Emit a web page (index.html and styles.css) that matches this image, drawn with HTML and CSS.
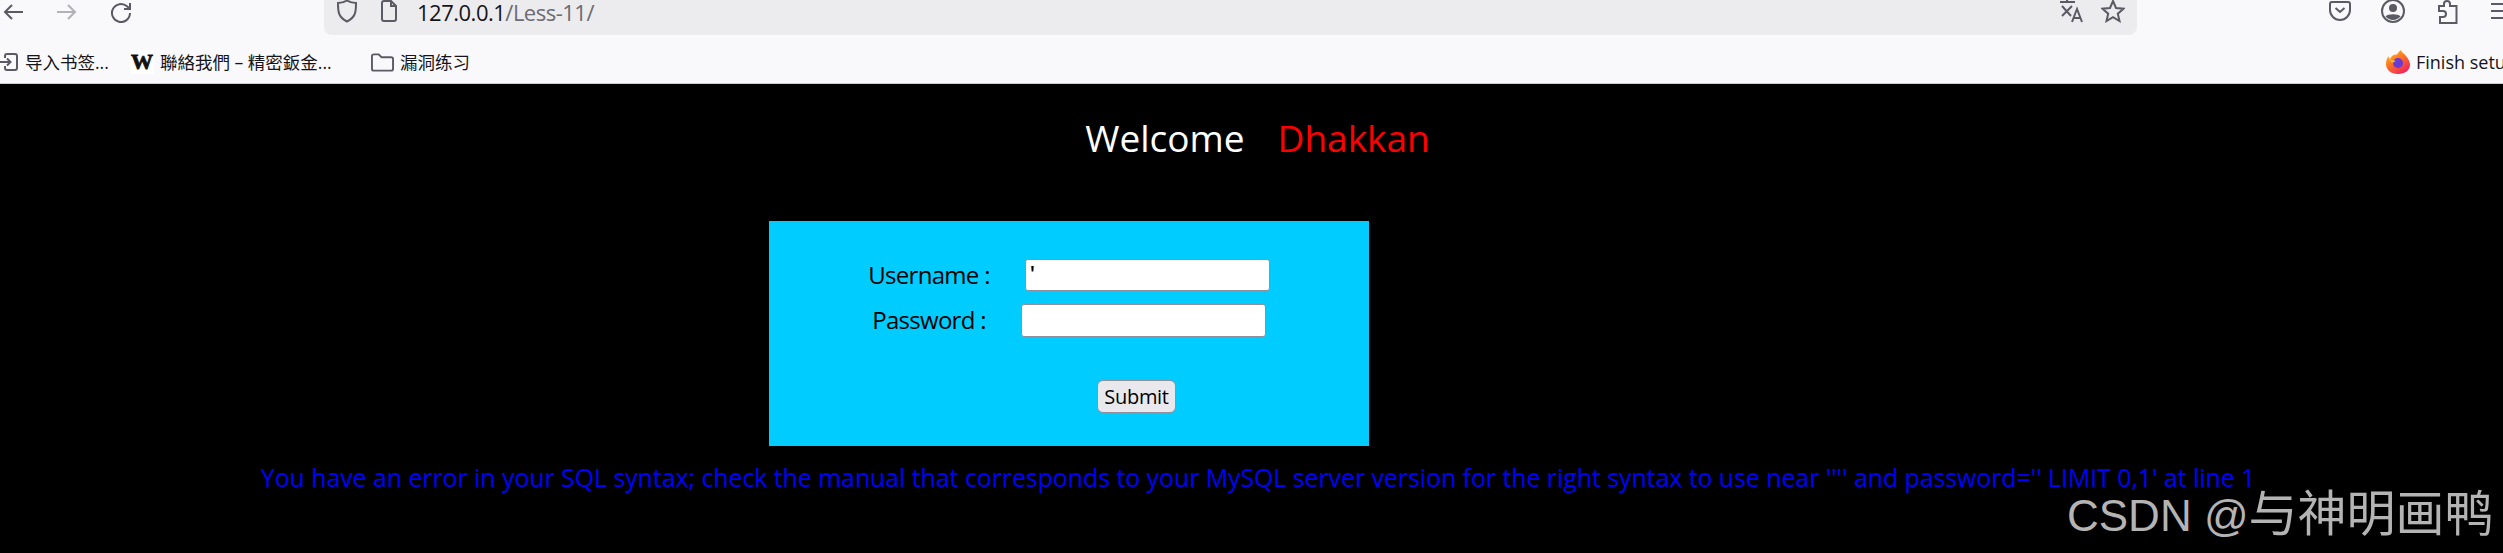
FILE: index.html
```html
<!DOCTYPE html>
<html lang="en">
<head>
<meta charset="utf-8">
<title>Less-11</title>
<link rel="stylesheet" href="styles.css">
</head>
<body>
<header class="chrome">
  <div class="toolbar">
    <div class="nav">
      <svg class="ic" viewBox="0 0 22 20"><path d="M21 10H3M10 3l-7 7 7 7"/></svg>
      <svg class="ic faded" viewBox="0 0 22 20"><path d="M1 10h18M12 3l7 7-7 7"/></svg>
      <svg class="ic reload" viewBox="0 0 22 22"><path d="M20 12a9 9 0 1 1-3-6.700L20 8M20 2v6h-6"/></svg>
    </div>
    <div class="urlbar">
      <svg class="ic shield" viewBox="0 0 22 24"><path d="M11 1.500c3 2 6 2.500 9 2.500 0 8 0 14-9 18.500C2 18 2 12 2 4c3 0 6-.5 9-2.500z"/></svg>
      <svg class="ic file" viewBox="0 0 18 22"><path d="M2 3a2 2 0 0 1 2-2h7l5 5v13a2 2 0 0 1-2 2H4a2 2 0 0 1-2-2zM11 1v5h5"/></svg>
      <span class="url"><span class="host">127.0.0.1</span>/Less-11/</span>
      <span class="url-actions">
        <svg class="ic translate" viewBox="0 0 24 24"><path d="M1 3h15M8 0v3M3 7l9 10M13 7 3 17M13 23l5-13 5 13M15 19h6"/></svg>
        <svg class="ic star" viewBox="0 0 24 24"><path d="M12 2l3 7 7.500.7-5.700 5 1.700 7.300-6.500-3.900L5.500 22l1.700-7.300-5.700-5L9 9z"/></svg>
      </span>
    </div>
    <div class="tools">
      <svg class="ic pocket" viewBox="0 0 22 20"><path d="M3 1h16a2 2 0 0 1 2 2v6a10 10 0 0 1-20 0V3a2 2 0 0 1 2-2zM6.500 7l4.500 4 4.500-4"/></svg>
      <svg class="ic account" viewBox="0 0 24 24"><circle cx="12" cy="12" r="11"/><circle class="solid" cx="12" cy="9" r="4"/><path class="solid" d="M4.500 17.500c2-3 13-3 15 0-4 4.500-11 4.500-15 0z"/></svg>
      <svg class="ic ext" viewBox="0 0 20 24"><path d="M1 6h5V4a3 3 0 0 1 6 0v2h6.500v17H2v-6h3a3 3 0 0 0 0-6H1z"/></svg>
      <svg class="ic menu" viewBox="0 0 12 22"><path d="M0 4h14M0 11h14M0 18h14"/></svg>
    </div>
  </div>
  <nav class="bookmarks">
    <svg class="ic mark-import" viewBox="0 0 18 18"><path d="M5 5V3a2 2 0 0 1 2-2h8a2 2 0 0 1 2 2v12a2 2 0 0 1-2 2H7a2 2 0 0 1-2-2v-2M0 9h10M7 5.500 10.500 9 7 12.500"/></svg>
    <span class="mark mark-a">导入书签...</span>
    <span class="w-logo">W</span>
    <span class="mark mark-b">聯絡我們 – 精密鈑金...</span>
    <svg class="ic folder" viewBox="0 0 24 20"><path d="M1 4a2 2 0 0 1 2-2h5l3 3h10a2 2 0 0 1 2 2v10a2 2 0 0 1-2 2H3a2 2 0 0 1-2-2z"/></svg>
    <span class="mark mark-c">漏洞练习</span>
    <span class="setup">
      <svg class="fox" viewBox="0 0 24 24">
        <defs>
          <linearGradient id="foxg" x1="0" y1="0" x2="0.700" y2="1">
            <stop offset="0" stop-color="#ffcb2e"/>
            <stop offset="0.450" stop-color="#ff7a1f"/>
            <stop offset="1" stop-color="#f0235f"/>
          </linearGradient>
        </defs>
        <path fill="url(#foxg)" d="M15 0c.5 2.500 3 3.500 5 6 3 3.500 4 7 4 9 0 5-5 9-12 9S0 20 0 14c0-3 .8-6 2.500-8 0 1.500.5 2.500 1.500 3C5 6 8 4 11 4.500c1-2 2.500-3 4-4.500z"/>
        <circle cx="12" cy="13" r="5" fill="#6a3bd0"/>
        <path fill="#ffb52e" d="M3 9l7 2-4 2z"/>
      </svg>
      <span class="setup-text">Finish setup</span>
    </span>
  </nav>
</header>
<main class="page">
  <div class="welcome"><span>Welcome</span><span class="name">Dhakkan</span></div>
  <form class="login">
    <div class="row"><label class="lab">Username :</label><input class="field" type="text" value="'"></div>
    <div class="row row-pass"><label class="lab">Password :</label><input class="field" type="password"></div>
    <div class="actions"><button class="submit" type="button">Submit</button></div>
  </form>
  <p class="error">You have an error in your SQL syntax; check the manual that corresponds to your MySQL server version for the right syntax to use near '''' and password='' LIMIT 0,1' at line 1</p>
  <div class="watermark">CSDN @<span class="wm-cjk">与神明画鸭</span></div>
</main>
</body>
</html>
```
FILE: styles.css
```css
* { box-sizing: border-box; }
html, body { margin: 0; height: 100%; }
body {
  width: 2503px;
  height: 553px;
  overflow: hidden;
  background: #000;
  font-family: "Open Sans", "Noto Sans CJK SC", sans-serif;
  display: flex;
  flex-direction: column;
}
.chrome {
  height: 84px;
  background: #f9f9fb;
  border-bottom: 1px solid #ccc;
  flex: none;
}
.ic {
  display: block;
  flex: none;
  fill: none;
  stroke: #5b5b66;
  stroke-width: 2;
  overflow: hidden;
}
.toolbar {
  height: 36px;
  display: flex;
  align-items: flex-start;
  overflow: hidden;
}
.nav {
  width: 324px;
  display: flex;
  gap: 32px;
  padding: 2px 0 0 2px;
}
.nav .ic { width: 22px; height: 20px; }
.nav .reload { height: 22px; margin-top: -1px; }
.faded { opacity: .45; }
.urlbar {
  width: 1813px;
  height: 35px;
  background: #ececee;
  border-radius: 0 0 8px 8px;
  display: flex;
  align-items: flex-start;
  padding-left: 12px;
}
.shield { width: 22px; height: 24px; margin-top: -1px; }
.file { width: 18px; height: 22px; margin-left: 22px; }
.url {
  margin-left: 19px;
  font-size: 22px;
  line-height: 24px;
  color: #6b6b74;
  letter-spacing: -.5px;
  font-family: "Open Sans", sans-serif;
}
.host { color: #15141a; }
.url-actions {
  margin-left: auto;
  display: flex;
  gap: 18px;
  padding-right: 12px;
}
.translate, .star { width: 24px; height: 24px; margin-top: -1px; }
.tools {
  flex: 1;
  display: flex;
  align-items: flex-start;
  padding-left: 192px;
  overflow: hidden;
}
.pocket { width: 22px; height: 20px; margin-top: 1px; }
.account { width: 24px; height: 24px; margin-left: 30px; margin-top: -1px; }
.account .solid { fill: #5b5b66; stroke: none; }
.ext { width: 20px; height: 24px; margin-left: 33px; }
.menu { width: 12px; height: 22px; margin-left: 33px; }
.bookmarks {
  height: 47px;
  display: flex;
  align-items: center;
  padding-top: 5px;
}
.mark-import { width: 18px; height: 18px; }
.mark {
  font-size: 17.500px;
  line-height: 24px;
  color: #15141a;
  white-space: nowrap;
}
.mark-a { margin-left: 7px; width: 105px; }
.w-logo {
  width: 24px;
  height: 24px;
  background: #fff;
  color: #111;
  font: 900 22px/24px "Liberation Serif", serif;
  -webkit-text-stroke: .8px #111;
  text-align: center;
}
.mark-b { margin-left: 6px; width: 211px; }
.folder { width: 23px; height: 20px; }
.mark-c { margin-left: 6px; }
.setup {
  margin-left: auto;
  display: flex;
  align-items: center;
  width: 117px;
  overflow: hidden;
}
.fox { width: 24px; height: 24px; flex: none; }
.setup-text {
  margin-left: 6px;
  font-size: 18px;
  color: #15141a;
  white-space: nowrap;
}
.page {
  flex: 1;
  position: relative;
  color: #fff;
}
.welcome {
  display: flex;
  justify-content: center;
  gap: 33px;
  padding: 29px 0 0 12px;
  font-size: 37px;
  line-height: 50px;
}
.name { color: #f00; }
.login {
  width: 600px;
  height: 225px;
  margin: 58px 0 0 769px;
  background: #0cf;
  padding-top: 38px;
  color: #000;
  display: flex;
  flex-direction: column;
}
.row {
  display: flex;
  justify-content: center;
  align-items: center;
  gap: 35px;
  height: 32px;
}
.row-pass { margin-top: 13px; height: 33px; }
.row-pass .lab { margin-bottom: 2px; }
.lab { font-size: 24px; letter-spacing: -.7px; line-height: 32px; }
.field {
  width: 245px;
  height: 100%;
  padding: 0 4px 4px;
  border: 1px solid #8f8f9d;
  border-radius: 3px;
  background: #fff;
  font: 600 22px "Open Sans", sans-serif;
  color: #000;
}
.actions {
  margin-top: 43px;
  padding-left: 328px;
}
.submit {
  display: block;
  width: 79px;
  height: 33px;
  padding: 0;
  border: 1px solid #8f8f9d;
  border-radius: 6px;
  background: #e9e9ed;
  font: 20px "Open Sans", sans-serif;
  letter-spacing: -.3px;
  color: #000;
}
.error {
  margin: 13px 0 0;
  padding-left: 13px;
  text-align: center;
  color: #00f;
  font-size: 24.800px;
  line-height: 36px;
  white-space: nowrap;
}
.watermark {
  position: absolute;
  left: 2067px;
  top: 402px;
  font: 44px/56px "Liberation Sans", "Noto Sans CJK SC", sans-serif;
  color: #b4b4b4;
  white-space: nowrap;
}
.wm-cjk { font-size: 49px; }
```
